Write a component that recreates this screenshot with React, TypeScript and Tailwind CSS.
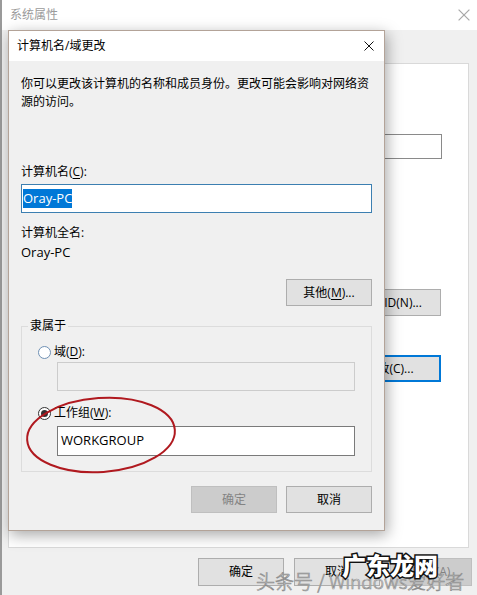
import React from "react";

const ui = { fontFamily: '"Open Sans", "Noto Sans CJK SC", sans-serif' };

function XIcon({ color, size = 10 }: { color: string; size?: number }) {
  return (
    <svg width={size} height={size} viewBox="0 0 10 10" fill="none">
      <path d="M0.5 0.5 L9.5 9.5 M9.5 0.5 L0.5 9.5" stroke={color} strokeWidth="1" />
    </svg>
  );
}

function Btn({
  children,
  w = "w-[86px]",
  h = "h-[27px]",
  disabled = false,
  primary = false,
}: {
  children?: React.ReactNode;
  w?: string;
  h?: string;
  disabled?: boolean;
  primary?: boolean;
}) {
  const base = "flex items-center justify-center text-[12px] shrink-0 ";
  const look = disabled
    ? "bg-[#cccccc] border border-[#bfbfbf] text-[#838383]"
    : primary
    ? "bg-[#e1e1e1] border-2 border-[#0078d7] text-black"
    : "bg-[#e1e1e1] border border-[#adadad] text-black";
  return <div className={`${base}${look} ${w} ${h}`}>{children}</div>;
}

function Radio({ checked }: { checked?: boolean }) {
  return (
    <div
      className={`w-[13px] h-[13px] rounded-full border bg-white flex items-center justify-center shrink-0 ${
        checked ? "border-[#333333]" : "border-[#6f90b4]"
      }`}
    >
      {checked && <div className="w-[7px] h-[7px] rounded-full bg-[#333333]" />}
    </div>
  );
}

export default function App() {
  return (
    <div className="relative w-[477px] h-[595px] bg-[#f0f0f0] overflow-hidden text-black" style={ui}>
      {/* Background window: 系统属性 */}
      <div className="flex flex-col h-full border-l-2 border-[#9a9a9a]">
        <div className="h-[30px] bg-white flex items-center justify-between pl-[8px] pr-[7px]">
          <span className="text-[12px] text-[#9b9b9b] leading-none">系统属性</span>
          <XIcon color="#a8a8a8" size={12} />
        </div>
        <div className="h-[33px]" />
        <div className="ml-[6px] w-[461px] h-[485px] bg-white border border-[#d9d9d9] flex flex-col items-end pr-[26px]">
          <div className="mt-[70px] w-[300px] h-[25px] border border-[#8a8a8a] bg-white" />
          <div className="mt-[130px] mr-[1px]">
            <Btn w="w-[103px]">网络 ID(N)...</Btn>
          </div>
          <div className="mt-[39px] mr-[1px]">
            <Btn w="w-[103px]" primary>
              更改(C)...
            </Btn>
          </div>
        </div>
        <div className="flex justify-end gap-[10px] pt-[10px] pr-[5px]">
          <Btn h="h-[28px]">确定</Btn>
          <Btn h="h-[28px]">取消</Btn>
          <Btn h="h-[28px]" w="w-[82px]" disabled>
            应用(A)
          </Btn>
        </div>
      </div>

      {/* Foreground dialog */}
      <div className="absolute left-[8px] top-[30px] w-[377px] h-[501px] border border-[#b3a398] bg-[#f0f0f0] flex flex-col shadow-[2px_4px_14px_rgba(0,0,0,0.35)]">
        <div className="h-[30px] bg-white flex items-center justify-between pl-[8px] pr-[10px] shrink-0">
          <span className="text-[12px] leading-none">计算机名/域更改</span>
          <XIcon color="#111" size={10} />
        </div>
        <div className="flex flex-col px-[12px] pt-[14px] text-[12px]">
          <p className="leading-[18px]">
            你可以更改该计算机的名称和成员身份。更改可能会影响对网络资
            <br />
            源的访问。
          </p>
          <div className="mt-[52px] leading-[18px]">
            计算机名(<u className="underline-offset-2">C</u>):
          </div>
          <div className="mt-[3px] h-[29px] border border-[#3c7fb1] bg-white flex items-center pl-[1px]">
            <span className="bg-[#0078d7] text-white text-[13px] leading-[19px]">Oray-PC</span>
          </div>
          <div className="mt-[11px] leading-[18px]">计算机全名:</div>
          <div className="mt-[1px] leading-[18px] text-[13px]">Oray-PC</div>
          <div className="mt-[18px] self-end">
            <Btn>
              其他(<u className="underline-offset-2">M</u>)...
            </Btn>
          </div>

          <div className="relative mt-[20px] h-[146px] border border-[#dcdcdc] flex flex-col">
            <span className="absolute left-[6px] -top-[10px] px-[2px] bg-[#f0f0f0] leading-[18px]">隶属于</span>
            <div className="mt-[16px] ml-[16px] flex items-center gap-[3px] h-[18px]">
              <Radio />
              <span>
                域(<u className="underline-offset-2">D</u>):
              </span>
            </div>
            <div className="mt-[1px] ml-[35px] mr-[16px] h-[29px] border border-[#cccccc] bg-[#f0f0f0]" />
            <div className="mt-[13px] ml-[16px] flex items-center gap-[3px] h-[18px]">
              <Radio checked />
              <span>
                工作组(<u className="underline-offset-2">W</u>):
              </span>
            </div>
            <div className="mt-[4px] ml-[35px] mr-[16px] h-[30px] border border-[#7a7a7a] bg-white flex items-center pl-[3px]">
              <span className="text-[13px]">WORKGROUP</span>
            </div>
          </div>

          <div className="mt-[14px] flex justify-end gap-[9px]">
            <Btn disabled>确定</Btn>
            <Btn>取消</Btn>
          </div>
        </div>
      </div>

      {/* Red annotation ellipse */}
      <svg className="absolute left-0 top-0 pointer-events-none" width="477" height="595">
        <ellipse
          cx="101"
          cy="435"
          rx="74"
          ry="37"
          fill="none"
          stroke="#b0191f"
          strokeWidth="2"
          transform="rotate(-4 101 435)"
        />
      </svg>

      {/* Watermarks */}
      <div
        className="absolute left-[256px] top-[569px] text-[19px] leading-[24px] text-white/80 whitespace-nowrap [-webkit-text-stroke:0.7px_#8c8c8c] [font-family:'Noto_Sans_CJK_SC',sans-serif] font-light"
      >
        头条号 / Windows爱好者
      </div>
      <div
        className="absolute left-[342px] top-[550px] text-[24px] leading-[30px] text-white font-black whitespace-nowrap [-webkit-text-stroke:3px_#111] [paint-order:stroke_fill] [font-family:'Noto_Sans_CJK_SC',sans-serif]"
      >
        广东龙网
      </div>
    </div>
  );
}
